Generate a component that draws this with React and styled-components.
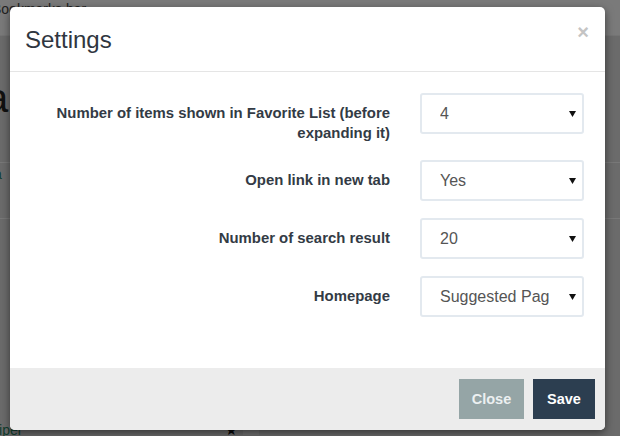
import React from "react";
import styled, { createGlobalStyle } from "styled-components";

const Global = createGlobalStyle`
  html, body { margin: 0; padding: 0; }
  body {
    width: 620px;
    height: 436px;
    overflow: hidden;
    font-family: "Liberation Sans", Arial, sans-serif;
    background: #d6d6d6;
  }
`;

const Page = styled.div`
  position: relative;
  width: 620px;
  height: 436px;
  overflow: hidden;
  background: #d6d6d6;
`;

const BookmarksBar = styled.div`
  height: 36px;
  background: #f4f4f4;
  border-bottom: 1px solid #e8e8e8;
  display: flex;
  align-items: flex-start;
  padding-top: 1px;
  box-sizing: border-box;
`;

const BarText = styled.span`
  margin-left: -8px;
  font-size: 14px;
  color: #444;
`;

const PageBody = styled.div`
  display: flex;
  flex-direction: column;
`;

const BigLetter = styled.div`
  margin-top: 40px;
  margin-left: -14px;
  font-size: 40px;
  line-height: 44px;
  color: #222;
`;

const Divider = styled.div`
  margin-top: ${(p) => p.$top}px;
  height: 1px;
  background: #f0f0f0;
`;

const GreenText = styled.div`
  margin-top: ${(p) => p.$top}px;
  margin-left: -10px;
  font-size: 14px;
  color: #1f7a5a;
`;

const BottomRow = styled.div`
  margin-top: ${(p) => p.$top}px;
  display: flex;
  align-items: center;
  height: 16px;
`;

const Star = styled.span`
  margin-left: 203px;
  font-size: 14px;
  color: #111;
`;

const SmallBox = styled.span`
  margin-left: 5px;
  width: 16px;
  height: 10px;
  background: #e6e6e6;
`;

const Overlay = styled.div`
  position: absolute;
  inset: 0;
  background: rgba(0, 0, 0, 0.5);
  display: flex;
  align-items: flex-start;
  padding: 7px 0 0 10px;
  box-sizing: border-box;
`;

const Modal = styled.div`
  width: 595px;
  height: 423px;
  background: #fff;
  border-radius: 5px;
  box-shadow: 0 3px 9px rgba(0, 0, 0, 0.5);
  display: flex;
  flex-direction: column;
  overflow: hidden;
`;

const Header = styled.div`
  height: 65px;
  box-sizing: border-box;
  border-bottom: 1px solid #e5e5e5;
  display: flex;
  align-items: center;
  justify-content: space-between;
  padding: 0 16px 0 15px;
`;

const Title = styled.h4`
  margin: 0;
  font-size: 24px;
  font-weight: normal;
  color: #2f3640;
  padding-top: 1px;
`;

const CloseX = styled.span`
  font-size: 20px;
  font-weight: bold;
  color: #c4c4c4;
  line-height: 1;
  margin-top: -14px;
`;

const Body = styled.div`
  flex: 1;
  padding: 21px 21px 0 15px;
  display: flex;
  flex-direction: column;
  gap: 17px;
`;

const Row = styled.div`
  display: grid;
  grid-template-columns: 1fr 164px;
  column-gap: 30px;
  align-items: start;
`;

const Label = styled.label`
  text-align: right;
  font-size: 14.9px;
  font-weight: bold;
  line-height: 20px;
  color: #333b45;
  padding-top: 10px;
`;

const Select = styled.div`
  height: 41px;
  box-sizing: border-box;
  border: 2px solid #e3e9ef;
  border-radius: 3px;
  display: flex;
  align-items: center;
  padding: 0 6px 0 18px;
  background: #fff;
`;

const Value = styled.span`
  width: 109px;
  overflow: hidden;
  white-space: nowrap;
  font-size: 16px;
  color: #555;
`;

const Arrow = styled.svg`
  margin-left: auto;
`;

const Footer = styled.div`
  height: 62px;
  box-sizing: border-box;
  background: #ececec;
  display: flex;
  justify-content: flex-end;
  align-items: flex-start;
  gap: 9px;
  padding: 11px 10px 0 0;
`;

const Button = styled.button`
  height: 40px;
  width: ${(p) => p.$w}px;
  border: none;
  border-radius: 0;
  background: ${(p) => p.$bg};
  color: ${(p) => p.$fg};
  font-family: "Liberation Sans", Arial, sans-serif;
  font-size: 14.5px;
  font-weight: bold;
  padding: 0;
`;

const settings = [
  { label: ["Number of items shown in Favorite List (before", "expanding it)"], value: "4" },
  { label: ["Open link in new tab"], value: "Yes" },
  { label: ["Number of search result"], value: "20" },
  { label: ["Homepage"], value: "Suggested Page" },
];

export default function App() {
  return (
    <>
      <Global />
      <Page>
        <BookmarksBar>
          <BarText>Bookmarks bar</BarText>
        </BookmarksBar>
        <PageBody>
          <BigLetter>a</BigLetter>
          <Divider $top={42} />
          <GreenText $top={3}>ta</GreenText>
          <Divider $top={36} />
          <BottomRow $top={203}>
            <GreenText $top={0}>Viper</GreenText>
            <Star>★</Star>
            <SmallBox />
          </BottomRow>
        </PageBody>
        <Overlay>
          <Modal>
            <Header>
              <Title>Settings</Title>
              <CloseX>×</CloseX>
            </Header>
            <Body>
              {settings.map((s) => (
                <Row key={s.value}>
                  <Label>
                    {s.label.map((l, i) => (
                      <React.Fragment key={i}>
                        {i > 0 && <br />}
                        {l}
                      </React.Fragment>
                    ))}
                  </Label>
                  <Select>
                    <Value>{s.value}</Value>
                    <Arrow width="7" height="6" viewBox="0 0 7 6">
                      <path d="M0 0 H7 L3.5 6 Z" fill="#111" />
                    </Arrow>
                  </Select>
                </Row>
              ))}
            </Body>
            <Footer>
              <Button $w={65} $bg="#95a5a6" $fg="#ecf0f1">Close</Button>
              <Button $w={62} $bg="#2c3e50" $fg="#fff">Save</Button>
            </Footer>
          </Modal>
        </Overlay>
      </Page>
    </>
  );
}
